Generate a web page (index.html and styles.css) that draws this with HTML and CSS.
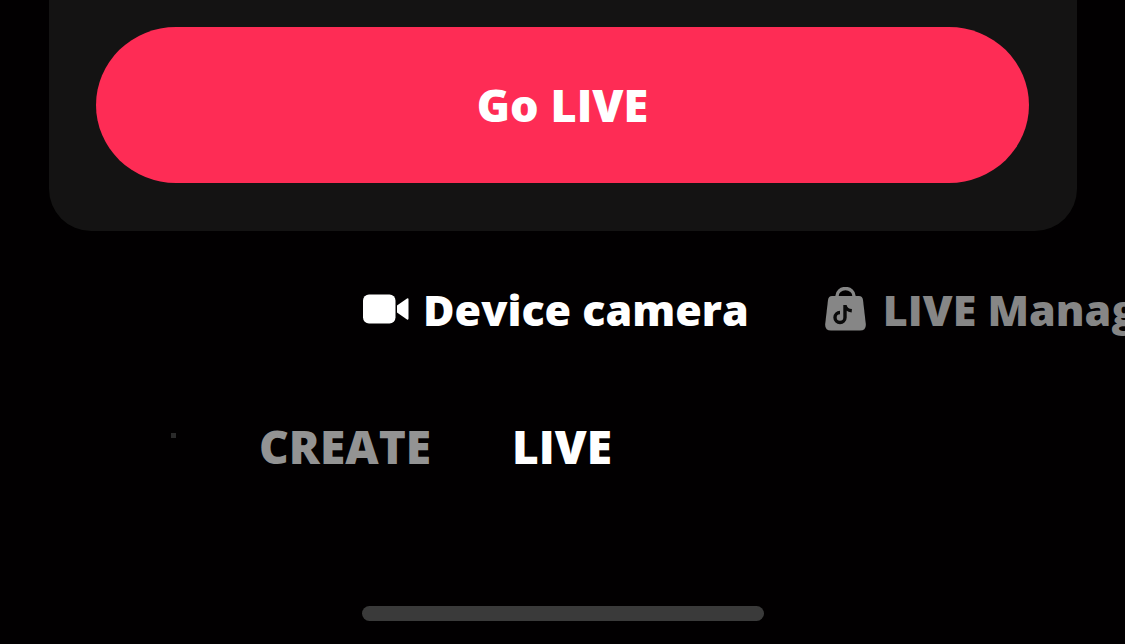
FILE: index.html
```html
<!DOCTYPE html>
<html lang="en">
<head>
    <meta charset="UTF-8">
    <meta name="viewport" content="width=device-width, initial-scale=1.0">
    <title>Go LIVE</title>
    <link rel="stylesheet" href="styles.css">
</head>
<body>
    <div class="card">
        <button class="go-live">Go LIVE</button>
    </div>

    <div class="sources">
        <div class="source source-active">
            <svg class="icon-camera" width="46" height="30" viewBox="0 0 46 30">
                <rect x="0" y="0.5" width="32.5" height="29" rx="6" fill="#fff"/>
                <path d="M34 11.5 L44 4.6 Q45.500 3.800 45.500 5.400 V24.600 Q45.500 26.200 44 25.400 L34 18.500 Z" fill="#fff"/>
            </svg>
            <span>Device camera</span>
        </div>
        <div class="source">
            <svg class="icon-bag" width="41" height="44" viewBox="0 0 41 44">
                <path d="M12 11 V9 a8.500 7.500 0 0 1 17 0 V11" fill="none" stroke="#868686" stroke-width="3.400"/>
                <path d="M7 9 H34 Q37.500 9 38 13 L40.800 37 Q41.300 43.500 35 43.500 H6 Q-0.300 43.500 0.200 37 L3 13 Q3.500 9 7 9 Z" fill="#868686"/>
                <path d="M20 18 V30.500 a5 5 0 1 1 -5 -5 M20 18.500 q1 4.700 6.800 5.200" fill="none" stroke="#0a0a0a" stroke-width="3.400"/>
            </svg>
            <span>LIVE Manager</span>
        </div>
    </div>

    <div class="tabs">
        <i class="tab-dot"></i>
        <span class="tab">CREATE</span>
        <span class="tab tab-active">LIVE</span>
    </div>

    <div class="home-bar"></div>
</body>
</html>
```

FILE: styles.css
```css
* {
    margin: 0;
    padding: 0;
    box-sizing: border-box;
    font-family: "Open Sans", "Noto Sans", sans-serif;
}

html, body {
    height: 100%;
    overflow: hidden;
    background: #020001;
}

body {
    display: flex;
    flex-direction: column;
}

.card {
    width: 1028px;
    height: 231px;
    margin-left: 49px;
    padding: 27px 48px 48px 47px;
    background: #141313;
    border-radius: 0 0 42px 42px;
}

.go-live {
    display: block;
    width: 100%;
    height: 156px;
    padding-bottom: 2px;
    border: none;
    border-radius: 80px / 78px;
    background: #fe2c55;
    color: #fff;
    font-size: 45px;
    font-weight: 800;
}

.sources {
    display: flex;
    align-items: center;
    gap: 76px;
    height: 64px;
    margin-top: 46px;
    padding-left: 363px;
    overflow: hidden;
    white-space: nowrap;
}

.source {
    display: flex;
    align-items: center;
    flex-shrink: 0;
    gap: 14px;
    color: #868686;
    font-size: 43px;
    font-weight: 800;
}

.source-active {
    color: #fff;
}

.icon-bag {
    margin-right: 3px;
}

.tabs {
    display: flex;
    align-items: center;
    height: 50px;
    margin-top: 80px;
    padding-left: 171px;
    color: #939393;
    font-size: 46px;
    font-weight: 800;
}

.tab-dot {
    width: 5px;
    height: 5px;
    margin-right: 83px;
    margin-bottom: 22px;
    background: #2a2a2a;
}

.tab {
    margin-right: 81px;
}

.tab-active {
    color: #fff;
}

.home-bar {
    width: 402px;
    height: 15px;
    margin-top: 135px;
    margin-left: 362px;
    background: #3a3a3a;
    border-radius: 8px;
}
```
